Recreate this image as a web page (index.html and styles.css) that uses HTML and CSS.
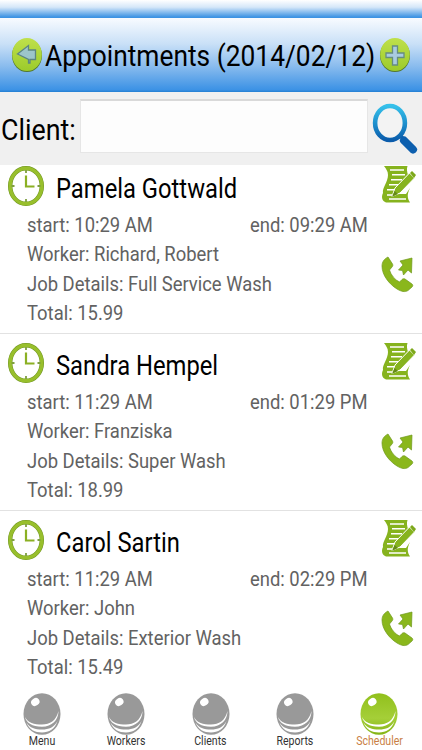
FILE: index.html
```html
<!DOCTYPE html>
<html lang="en">
<head>
  <meta charset="UTF-8">
  <meta name="viewport" content="width=device-width, initial-scale=1">
  <title>Appointments</title>
  <link rel="stylesheet" href="styles.css">
</head>
<body>
  <svg class="defs" width="0" height="0">
    <defs>
      <linearGradient id="lime" x1="0" y1="0" x2="0" y2="1">
        <stop offset="0" stop-color="#bfe04b"/>
        <stop offset="1" stop-color="#9ccb2b"/>
      </linearGradient>
      <linearGradient id="blue" x1="0" y1="0" x2="0" y2="1">
        <stop offset="0" stop-color="#35c0ea"/>
        <stop offset="0.55" stop-color="#1c8ccb"/>
        <stop offset="1" stop-color="#0b5cab"/>
      </linearGradient>
      <linearGradient id="ballGreen" x1="0" y1="0" x2="0" y2="1">
        <stop offset="0" stop-color="#91c01c"/>
        <stop offset="0.6" stop-color="#a5cf38"/>
        <stop offset="1" stop-color="#84b316"/>
      </linearGradient>
    </defs>
    <symbol id="clock" viewBox="0 0 36 40">
      <ellipse cx="18" cy="20" rx="15.8" ry="17.8" fill="none" stroke="#6f9422" stroke-width="4.4"/>
      <ellipse cx="18" cy="20" rx="15.8" ry="17.8" fill="none" stroke="#98bf2c" stroke-width="3.4"/>
      <path d="M18 4v3M18 33v3M3.500 20h3M29.500 20h3" stroke="#7f9f40" stroke-width="1.800"/>
      <path d="M18 9.500v11h8.500" fill="none" stroke="#8bb023" stroke-width="2.200"/>
    </symbol>
    <symbol id="note" viewBox="0 0 36 40">
      <path d="M3 1H26.500C25.500 4 26 7 27 10L17 21 13 29H25L29 23C26 29 26 33 29 37.500H5C1 36 0 32 2 28C1 23 7 17 7 10C7 6 5 4 3 1Z" fill="#86b31e"/>
      <path d="M9 5H23M11 9.800H24M10 14.800H21M8 19.800H17M6 24.800H13M6 30H11M8 34H25" stroke="#fff" stroke-width="1.600"/>
      <path d="M11 31.500L14 23 28.500 8 33.500 13 19 28Z" fill="#86b31e" stroke="#fff" stroke-width="1"/>
      <path d="M29 8L31 6 35 10 33 13Z" fill="#7da81b"/>
      <path d="M11 32L13.500 26 17 29Z" fill="#648a17"/>
    </symbol>
    <symbol id="call" viewBox="0 0 34 38">
      <path d="M7 2L11.500 9C12 10 12 11 11 12L8.500 15C10 20 14 25 18.500 27L21 24.500C22 23.500 23 23.500 24 24L31 29C32 30 32 31 31 32L27 35.500C24 37.500 20 36.500 16 34C8 29 1 20 1 11C1 7 3 4 7 2Z" fill="#8ab71c" stroke="#6f981b" stroke-width=".7"/>
      <path d="M19 6L31 3 30.500 18 27 15 22.500 20 21.500 15.500 17.500 15 22 10Z" fill="#8ab71c" stroke="#6f981b" stroke-width=".7"/>
    </symbol>
    <symbol id="ball" viewBox="0 0 38 42">
      <ellipse cx="19" cy="21" rx="18.500" ry="20.800"/>
      <path d="M2 24C5 30 11 31.500 19 31.500S33 28 35.500 18C35.500 27 29 33.700 19 33.700S3.500 30 2 24Z" fill="#fff"/>
      <path d="M3.500 29.500C7 35 12 36.500 19 36.500S31 34.500 34.500 28C32 36 26 39.500 19 39.500S6 36.500 3.500 29.500Z" fill="#fff"/>
      <ellipse cx="12.300" cy="9" rx="4.400" ry="3.700" transform="rotate(-35 12.300 9)" fill="#fff"/>
    </symbol>
  </svg>

  <div class="status-strip"></div>
  <header class="title-bar">
    <svg class="round-button" viewBox="0 0 32 36">
      <ellipse cx="16" cy="18.500" rx="15" ry="16.500" fill="#53772e"/>
      <ellipse cx="16" cy="17.500" rx="14.800" ry="16.500" fill="url(#lime)"/>
      <path d="M6.500 17L17.500 8.500V13H24.500V22.500H19V26L17.500 26V22.500Z" fill="#9cc5cb" stroke="#5c8580" stroke-width="1.300"/>
    </svg>
    <h1><span class="narrow">Appointments (2014/02/12)</span></h1>
    <svg class="round-button" viewBox="0 0 32 36">
      <ellipse cx="16" cy="18.500" rx="15" ry="16.500" fill="#53772e"/>
      <ellipse cx="16" cy="17.500" rx="14.800" ry="16.500" fill="url(#lime)"/>
      <path d="M13.500 9H18.500V16H25V20.500H18.500V28H13.500V20.500H7V16H13.500Z" fill="#a9cbe0" stroke="#668c80" stroke-width="1.300"/>
    </svg>
  </header>

  <form class="search">
    <label for="client"><span class="narrow">Client:</span></label>
    <input type="text" id="client">
    <svg class="lens" viewBox="0 0 46 52">
      <path d="M28.500 33L39.500 45" stroke="#0d5fae" stroke-width="4"/>
      <path d="M32 37.500L41 46.500" stroke="#0d5fae" stroke-width="8" stroke-linecap="round"/>
      <ellipse cx="18" cy="20" rx="14.900" ry="17" fill="#f3f3f3" stroke="url(#blue)" stroke-width="4.600"/>
    </svg>
  </form>

  <main class="appointments">
    <article class="appointment">
      <svg class="clock"><use href="#clock"/></svg>
      <div class="details">
        <h2><span class="narrow">Pamela Gottwald</span></h2>
        <div class="times">
          <span class="narrow start">start: 10:29 AM</span>
          <span class="narrow">end: 09:29 AM</span>
        </div>
        <p><span class="narrow">Worker: Richard, Robert</span></p>
        <p><span class="narrow">Job Details: Full Service Wash</span></p>
        <p><span class="narrow">Total: 15.99</span></p>
      </div>
      <div class="actions">
        <svg class="note"><use href="#note"/></svg>
        <svg class="call"><use href="#call"/></svg>
      </div>
    </article>
    <article class="appointment">
      <svg class="clock"><use href="#clock"/></svg>
      <div class="details">
        <h2><span class="narrow">Sandra Hempel</span></h2>
        <div class="times">
          <span class="narrow start">start: 11:29 AM</span>
          <span class="narrow">end: 01:29 PM</span>
        </div>
        <p><span class="narrow">Worker: Franziska</span></p>
        <p><span class="narrow">Job Details: Super Wash</span></p>
        <p><span class="narrow">Total: 18.99</span></p>
      </div>
      <div class="actions">
        <svg class="note"><use href="#note"/></svg>
        <svg class="call"><use href="#call"/></svg>
      </div>
    </article>
    <article class="appointment">
      <svg class="clock"><use href="#clock"/></svg>
      <div class="details">
        <h2><span class="narrow">Carol Sartin</span></h2>
        <div class="times">
          <span class="narrow start">start: 11:29 AM</span>
          <span class="narrow">end: 02:29 PM</span>
        </div>
        <p><span class="narrow">Worker: John</span></p>
        <p><span class="narrow">Job Details: Exterior Wash</span></p>
        <p><span class="narrow">Total: 15.49</span></p>
      </div>
      <div class="actions">
        <svg class="note"><use href="#note"/></svg>
        <svg class="call"><use href="#call"/></svg>
      </div>
    </article>
  </main>

  <nav class="tabs">
    <a class="tab"><svg><use href="#ball"/></svg><span>Menu</span></a>
    <a class="tab"><svg><use href="#ball"/></svg><span>Workers</span></a>
    <a class="tab"><svg><use href="#ball"/></svg><span>Clients</span></a>
    <a class="tab"><svg><use href="#ball"/></svg><span>Reports</span></a>
    <a class="tab active"><svg><use href="#ball"/></svg><span>Scheduler</span></a>
  </nav>
</body>
</html>
```
FILE: styles.css
```css
* {
  box-sizing: border-box;
}
body {
  font-family: Roboto, "Liberation Sans", sans-serif;
  margin: 0;
  width: 422px;
  height: 750px;
  overflow: hidden;
  background: #fff;
  color: #000;
  display: flex;
  flex-direction: column;
}
h1, h2, p {
  margin: 0;
  font-weight: normal;
  white-space: nowrap;
}
svg {
  display: block;
  flex: none;
}
.defs {
  height: 0;
}
.narrow {
  display: inline-block;
  flex: none;
  white-space: nowrap;
  transform: scaleX(0.893);
  transform-origin: left;
}
.status-strip {
  height: 18px;
  flex: none;
  background: linear-gradient(#fff, #d5e7f9 40%, #3d93e3 95%);
}
.title-bar {
  height: 74px;
  flex: none;
  display: flex;
  align-items: center;
  padding: 0 11px 0 11px;
  background: linear-gradient(#f8fbff, #c9e0f7 35%, #8abcee 65%, #3c92e5 97%, #237fd2);
}
.round-button {
  width: 32px;
  height: 36px;
}
h1 {
  width: 336px;
  padding: 2px 0 0 2px;
  font-size: 29.5px;
}
.search {
  height: 73px;
  flex: none;
  display: flex;
  align-items: flex-start;
  background: #f0f0f0;
}
.search label {
  width: 80px;
  padding: 20px 0 0 1px;
  font-size: 30px;
  line-height: 36px;
}
.search input {
  width: 288px;
  height: 54px;
  margin: 7px 0 0;
  padding: 0 8px;
  font: inherit;
  border: 1px solid #e6e6e6;
  border-top: 2px solid #d9d9d9;
  background: #fdfdfd;
}
.lens {
  width: 46px;
  height: 52px;
  margin: 11px 0 0 4px;
}
.appointment {
  display: flex;
  height: 177px;
  padding-left: 8px;
  border-bottom: 1px solid #e2e2e2;
}
.appointment:first-child {
  height: 169px;
}
.appointment:first-child > * {
  margin-top: -8px;
}
.appointment:last-child {
  border-bottom: none;
}
.clock {
  width: 36px;
  height: 40px;
  position: relative;
  top: 9px;
}
.details {
  width: 341px;
  margin-left: -17px;
  padding-top: 14px;
}
h2 {
  padding-left: 29px;
  font-size: 26.8px;
  line-height: 36px;
  height: 40px;
}
h2 .narrow {
  transform: scaleX(0.887);
}
.times, .details p {
  height: 29.4px;
  font-size: 20.8px;
  line-height: 29.4px;
  color: #626262;
}
.times .narrow, .details p .narrow {
  transform: scaleX(0.886);
}
.times {
  display: flex;
}
.start {
  width: 223px;
}
.actions {
  padding-top: 8px;
  margin-left: 14px;
}
.note {
  width: 36px;
  height: 40px;
  margin-left: -1px;
}
.call {
  width: 34px;
  height: 38px;
  margin: 50px 0 0 -1px;
}
.tabs {
  display: flex;
  position: relative;
  height: 62px;
  flex: none;
}
.tab {
  width: 84.3px;
  display: flex;
  flex-direction: column;
  align-items: center;
  fill: #999;
  color: #333;
  font-size: 12px;
  line-height: 13px;
}
.tab svg {
  width: 38px;
  height: 42px;
  margin-top: 5px;
}
.tab span {
  transform: scaleX(0.88);
}
.tab.active {
  fill: url(#ballGreen);
  color: #c97f45;
}
```
